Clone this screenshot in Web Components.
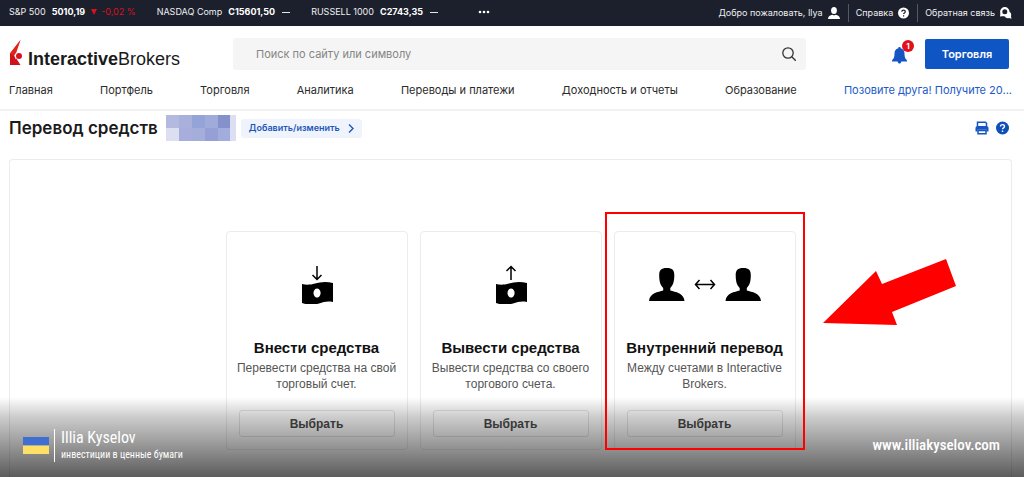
<!DOCTYPE html>
<html lang="ru">
<head>
<meta charset="utf-8">
<title>Перевод средств</title>
<style>
body { margin: 0; background: #fff; color: #222; font: 11px/16px Inter, "Liberation Sans", sans-serif; }
</style>
</head>
<body>
<ib-page></ib-page>
<script>
const define = (name, html) => customElements.define(name, class extends HTMLElement {
  constructor() {
    super();
    const t = document.createElement('template');
    t.innerHTML = html;
    this.attachShadow({ mode: 'open' }).append(t.content.cloneNode(true));
  }
});

define('ib-quote', `
<style>
:host { display: flex; gap: 6px; align-items: center; white-space: nowrap; }
b { font-weight: 700; color: #fff; }
</style>
<span><slot name="name"></slot></span><b><slot name="price"></slot></b><slot></slot>`);

define('ib-topbar', `
<style>
:host { display: flex; align-items: center; justify-content: space-between; height: 26px; padding: 0 12px 0 9px; background: #1c202c; color: #eeeff1; font: 9px/16px Inter, sans-serif; }
.quotes, .user { display: flex; align-items: center; }
.quotes { gap: 21px; height: 24px; align-self: flex-start; }
.down { color: #d5121e; display: flex; gap: 4px; align-items: center; }
.dash { width: 8px; height: 1px; background: #e4e5e8; margin-left: 1px; }
button { border: 0; background: none; padding: 0; margin-left: 19px; display: flex; }
a { color: inherit; text-decoration: none; display: flex; gap: 5px; align-items: center; white-space: nowrap; height: 18px; line-height: 18px; }
a + a { border-left: 1px solid #555963; margin-left: 8px; padding-left: 7px; }
svg { display: block; }
</style>
<div class="quotes">
  <ib-quote><span slot="name">S&amp;P 500</span><span slot="price">5010,19</span>
    <span class="down"><svg width="6" height="6"><path d="M0 0h6L3 6z" fill="currentColor"/></svg>-0,02 %</span></ib-quote>
  <ib-quote><span slot="name">NASDAQ Comp</span><span slot="price">C15601,50</span><span class="dash"></span></ib-quote>
  <ib-quote><span slot="name">RUSSELL 1000</span><span slot="price">C2743,35</span><span class="dash"></span></ib-quote>
  <button aria-label="Ещё"><svg width="12" height="4" fill="#fff"><circle cx="2" cy="2" r="1.3"/><circle cx="6" cy="2" r="1.3"/><circle cx="10" cy="2" r="1.3"/></svg></button>
</div>
<div class="user">
  <a href="#">Добро пожаловать, Ilya <svg width="12" height="12" fill="#fff"><ellipse cx="6" cy="3.5" rx="2.9" ry="3.5"/><path d="M0 12c0-3 2-4 4.5-4.300Q6 9 7.500 7.700C10 8 12 9 12 12z"/></svg></a>
  <a href="#">Справка <svg width="11" height="12"><circle cx="5.500" cy="6" r="5.500" fill="#fff"/><path d="M3.800 4.800c0-2.400 3.500-2.200 3.500-.2 0 1.300-1.700 1.300-1.700 2.500M5.600 8.300v1.200" fill="none" stroke="#1c202c" stroke-width="1.200"/></svg></a>
  <a href="#">Обратная связь <svg width="12" height="12"><circle cx="8" cy="8" r="3.200" fill="#fff"/><path d="M9 11l2.500.8-.6-3z" fill="#fff"/><circle cx="4.800" cy="4.800" r="3.600" fill="#1c202c" stroke="#fff" stroke-width="2.200"/><path d="M.5 6L0 9.500 4 9z" fill="#fff"/></svg></a>
</div>`);

define('ib-logo', `
<style>
:host { display: block; margin-top: -2px; }
a { display: flex; align-items: flex-end; gap: 6px; color: #1a1a1a; text-decoration: none; font: 18px/16px "Liberation Sans", sans-serif; }
b { font-weight: 700; }
</style>
<a href="#"><svg width="13" height="27" viewBox="0 0 13 27"><path d="M11.500 0L1 13.500V25H11.500L7 18l-2-3z" fill="#d0111b"/><path d="M11.500 0L1 13.500 5 16 7.500 12z" fill="#e2231a"/><path d="M5 14.500l2.500 4L6.500 19z" fill="#fff"/><circle cx="10" cy="16" r="3" fill="#d81222"/></svg><span><b>Interactive</b>Brokers</span></a>`);

define('ib-header', `
<style>
:host { display: block; border-bottom: 2px solid #f1f1f1; padding: 12px 12px 0 9px; }
.row { display: flex; align-items: center; height: 32px; }
ib-logo { width: 224px; }
form { flex: 0 1 573px; display: flex; align-items: center; background: #f5f5f5; border-radius: 3px; height: 32px; }
input { flex: 1; border: 0; background: none; outline: 0; padding: 0 0 0 23px; font: 11px/16px Inter, sans-serif; color: #333; min-width: 0; }
input::placeholder { color: #858585; opacity: 1; }
form button { border: 0; background: none; padding: 0 10px; display: flex; }
.actions { margin-left: auto; padding-right: 3px; display: flex; align-items: center; gap: 11px; }
.bell { position: relative; border: 0; background: none; padding: 0; width: 22px; height: 24px; }
.bell svg { display: block; margin-top: 4px; }
.badge { position: absolute; right: 0; top: -2px; width: 12px; height: 12px; border-radius: 6px; background: #e0101c; color: #fff; font: 700 8px/12px Inter, sans-serif; }
.trade { width: 84px; height: 30px; border: 0; border-radius: 2px; background: #0f55c4; color: #fff; font: 600 11px/16px Inter, sans-serif; padding: 0; }
nav { display: flex; justify-content: space-between; height: 39px; align-items: center; white-space: nowrap; }
nav a { color: #2b2b2b; text-decoration: none; font: 11px/16px Inter, sans-serif; }
nav a.promo { color: #1a5ac6; }
</style>
<div class="row">
  <ib-logo></ib-logo>
  <form><input type="search" aria-label="Поиск" placeholder="Поиск по сайту или символу"><button type="button" aria-label="Найти"><svg width="14" height="14" fill="none" stroke="#333" stroke-width="1.300"><circle cx="6" cy="6" r="5.200"/><path d="M9.800 9.800l4 4"/></svg></button></form>
  <div class="actions">
    <button class="bell" aria-label="Уведомления"><svg width="15" height="18" fill="#1556c2"><path d="M7.500 0c.8 0 1.200.5 1.200 1.200 2.800.6 3.800 2.800 3.800 5.300 0 4.500 1.200 5.200 2.500 7v1H0v-1c1.300-1.800 2.500-2.500 2.500-7 0-2.500 1-4.700 3.800-5.300C6.300.5 6.700 0 7.500 0zM5.700 14.500h3.600C9.100 17.300 5.900 17.300 5.700 14.500z"/></svg><span class="badge">1</span></button>
    <button class="trade">Торговля</button>
  </div>
</div>
<nav>
  <a href="#">Главная</a><a href="#">Портфель</a><a href="#">Торговля</a><a href="#">Аналитика</a><a href="#">Переводы и платежи</a><a href="#">Доходность и отчеты</a><a href="#">Образование</a><a href="#" class="promo">Позовите друга! Получите 20...</a>
</nav>`);

define('ib-title', `
<style>
:host { display: flex; align-items: center; height: 34px; padding: 0 15px 0 9px; }
h1 { margin: 0 8px 0 0; font: 600 17px/20px Inter, sans-serif; color: #1b1b1b; white-space: nowrap; }
.edit { margin-left: 5px; height: 19px; padding: 0 8px; border: 0; border-radius: 3px; background: #eff4fc; color: #1f57b8; font: 600 9px/16px Inter, sans-serif; display: flex; align-items: center; gap: 8px; white-space: nowrap; }
.tools { margin-left: auto; display: flex; gap: 7px; }
.tools button { border: 0; background: none; padding: 0; display: flex; }
</style>
<h1>Перевод средств</h1>
<svg width="70" height="26" aria-hidden="true"><path fill="#b3b9df" d="M0 0h13v13H0z"/><path fill="#a9b0dc" d="M13 0h13v13H13z"/><path fill="#94a4d8" d="M26 0h13v13H26z"/><path fill="#9fabdb" d="M39 0h13v13H39z"/><path fill="#8491cb" d="M52 0h12v13H52z"/><path fill="#dcdff2" d="M64 0h6v26h-6zM0 13h13v13H0z"/><path fill="#a8aedb" d="M13 13h13v13H13z"/><path fill="#a5addb" d="M26 13h13v13H26z"/><path fill="#969fd6" d="M39 13h13v13H39z"/><path fill="#a3addd" d="M52 13h12v13H52z"/></svg>
<button class="edit">Добавить/изменить <svg width="6" height="9" fill="none" stroke="#1f57b8" stroke-width="1.400"><path d="M1 .5l4 4-4 4"/></svg></button>
<div class="tools">
  <button aria-label="Печать"><svg width="14" height="14" fill="none" stroke="#1556c2" stroke-width="1.500"><path d="M2.500 5V1.200h8l1 1V5M3 9.500v3.300h8V9.500z"/><path d="M0.500 10.500V7Q.5 5 2.500 5h9q2 0 2 2v3.500H11.500V8.800h-9v1.700z" fill="#1556c2" stroke="none"/></svg></button>
  <button aria-label="Помощь"><svg width="13" height="14"><circle cx="6.500" cy="7" r="6.500" fill="#0f4fb8"/><path d="M4.500 5.600c0-2.700 4-2.500 4-.2 0 1.500-2 1.400-2 2.800M6.500 9.500v1.500" fill="none" stroke="#fff" stroke-width="1.400"/></svg></button>
</div>`);

define('ib-card', `
<style>
:host { box-sizing: border-box; position: relative; display: flex; flex-direction: column; width: 182px; padding: 34px 8px 12px; border: 1px solid #ececec; border-radius: 4px; text-align: center; font-family: "Liberation Sans", sans-serif; }
.icon { height: 38px; display: flex; justify-content: center; align-items: flex-end; margin-bottom: 34px; }
h2 { margin: 0 0 2px; font: 700 15px/20px "Liberation Sans", sans-serif; color: #111; white-space: nowrap; }
p { margin: 0 0 18px; font-size: 12px; line-height: 16px; color: #555; }
button { height: 27px; margin: 0 4px; border: 1px solid #e4e4e4; border-radius: 3px; background: none; padding: 0; color: #4b4b4b; font: 700 12px/16px "Liberation Sans", sans-serif; }
</style>
<div class="icon"><slot name="icon"></slot></div>
<h2><slot name="title"></slot></h2>
<p><slot></slot></p>
<button>Выбрать</button>
<slot name="mark"></slot>`);

define('ib-highlight', `
<style>
:host { position: absolute; z-index: 2; top: -20px; bottom: -1px; left: -10px; right: -10px; border: 2px solid #f00; pointer-events: none; }
svg { position: absolute; left: 100%; top: 44px; margin-left: 20px; }
</style>
<svg width="134" height="70" fill="#f00"><path d="M0 65L53 13 59 26 123 1 133 28 69 54 74 67z"/></svg>`);

define('ib-panel', `
<style>
:host { flex: 1; display: flex; justify-content: center; align-items: flex-start; gap: 12px; margin: 14px 12px 0 9px; padding: 71px 0 26px; border: 1px solid #ececec; border-bottom: 0; border-radius: 4px 4px 0 0; }
svg { display: block; }
</style>
<ib-card>
  <svg slot="icon" width="32" height="39"><path d="M16 1v13M11.500 10l4.500 4.500 4.500-4.500" fill="none" stroke="#000" stroke-width="1.500"/><path fill-rule="evenodd" d="M1 19c4 1 8 1 13-.5S25 16 32 18v19c-6-1-9 0-14 1.500S6 40 1 38zM16 23.500a3.500 4.500 0 1 0 .1 0z"/></svg>
  <span slot="title">Внести средства</span>Перевести средства на свой торговый счет.
</ib-card>
<ib-card>
  <svg slot="icon" width="32" height="39"><path d="M16 15V2M11.500 6L16 1.500 20.500 6" fill="none" stroke="#000" stroke-width="1.500"/><path fill-rule="evenodd" d="M1 19c4 1 8 1 13-.5S25 16 32 18v19c-6-1-9 0-14 1.500S6 40 1 38zM16 23.500a3.500 4.500 0 1 0 .1 0z"/></svg>
  <span slot="title">Вывести средства</span>Вывести средства со своего торгового счета.
</ib-card>
<ib-card>
  <svg slot="icon" width="112" height="36"><g id="p"><path d="M17.800 0C23.500 0 25.300 2.500 25.300 7c0 6-1 10-4 13v2.500c5 1.500 13.500 2.500 14.200 10.500H0c.7-8 9.200-9 14.200-10.500V20c-3-3-4-7-4-13C10.200 2.500 12 0 17.800 0z"/></g><use href="#p" x="76.500"/><path d="M47 16.500h18M50.500 12L46.500 16.500l4 4.500M61.500 12l4 4.500-4 4.500" fill="none" stroke="#000" stroke-width="1.500"/></svg>
  <span slot="title">Внутренний перевод</span>Между счетами в Interactive Brokers.
  <ib-highlight slot="mark"></ib-highlight>
</ib-card>`);

define('ib-caption', `
<style>
:host { position: absolute; z-index: 1; left: 0; right: 0; bottom: 0; box-sizing: border-box; height: 80px; padding: 30px 24px 14px 23px; display: flex; align-items: center; justify-content: space-between; background: linear-gradient(rgba(0,0,0,0), rgba(0,0,0,.2) 25%, rgba(0,0,0,.64)); color: #fff; font-family: "Roboto Condensed", Roboto, sans-serif; }
.author { display: flex; align-items: center; gap: 5px; }
.text { border-left: 1px solid #fff; padding-left: 6px; display: flex; flex-direction: column; white-space: nowrap; }
strong { font-size: 16px; line-height: 18px; font-weight: 400; }
small { font-size: 10px; line-height: 15px; }
a { color: inherit; text-decoration: none; font-size: 15px; line-height: 20px; font-weight: 500; }
</style>
<div class="author">
  <svg width="26" height="17" aria-label="Флаг Украины"><path fill="#3f6fd1" d="M0 0h26v8.500H0z"/><path fill="#ffe066" d="M0 8.500h26V17H0z"/></svg>
  <div class="text"><strong>Illia Kyselov</strong><small>инвестиции в ценные бумаги</small></div>
</div>
<a href="#">www.illiakyselov.com</a>`);

define('ib-page', `
<style>
:host { position: relative; display: flex; flex-direction: column; min-height: 100vh; overflow: hidden; }
</style>
<ib-topbar></ib-topbar>
<ib-header></ib-header>
<ib-title></ib-title>
<ib-panel></ib-panel>
<ib-caption></ib-caption>`);
</script>
</body>
</html>
